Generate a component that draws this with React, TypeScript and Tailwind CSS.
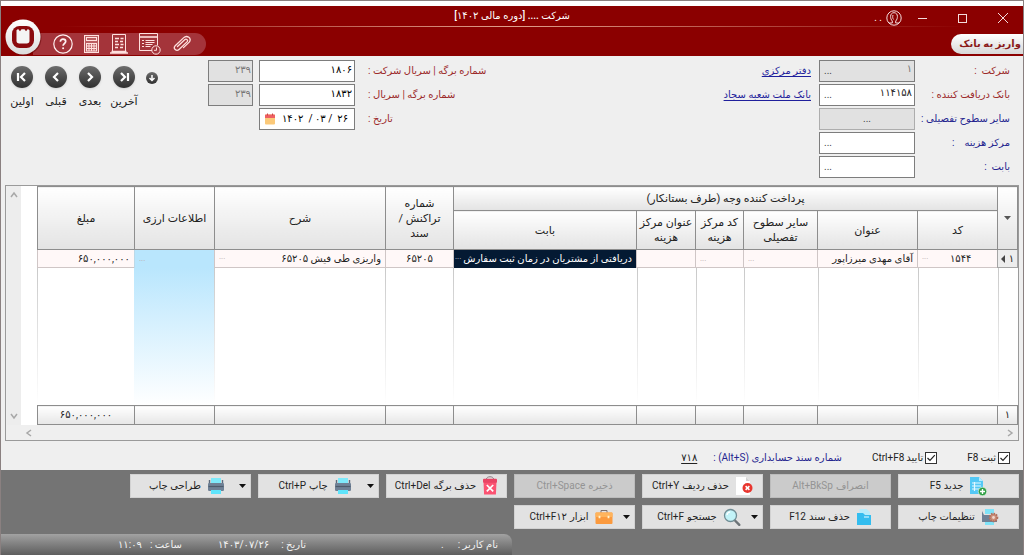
import type { ReactNode } from "react";

type IconProps = { className?: string };

function UserIcon() {
  return (
    <svg viewBox="0 0 16 16" className="size-4" fill="none" stroke="#f3dcdc" strokeWidth="1">
      <circle cx="8" cy="8" r="7.2" />
      <path d="M3 13h3.300v-2C5 9.800 4.600 8 4.600 6.400c0-2.200 1.300-3.700 3.400-3.700s3.400 1.500 3.400 3.700c0 1.600-.4 3.400-1.700 4.600v2H13" />
      <path d="M7 5c-.6 2-.3 3.500.6 4.500" />
    </svg>
  );
}

function Logo() {
  return (
    <svg viewBox="0 0 38 38" className="size-[38px]">
      <defs>
        <linearGradient id="ring" x1="0" y1="0" x2="0" y2="1">
          <stop offset="0" stopColor="#ffffff" />
          <stop offset="1" stopColor="#dcdcdc" />
        </linearGradient>
      </defs>
      <circle cx="20" cy="20" r="17.500" fill="#5c0000" opacity="0.45" />
      <circle cx="19" cy="19" r="17.500" fill="url(#ring)" />
      <rect x="8" y="8" width="22" height="22" rx="7.500" fill="#8b0a0e" />
      <path d="M12.500 12.300l1.600-1.300 1.900 2.200 1.500-2h3l1.500 2 1.900-2.200 1.600 1.300v10.400c0 1.800-1 2.800-2.800 2.800h-7.400c-1.800 0-2.800-1-2.800-2.800z" fill="#f4f4f4" />
    </svg>
  );
}

function HelpIcon() {
  return (
    <svg viewBox="0 0 20 20" className="size-5" fill="none" stroke="#fff0f0" strokeWidth="1.200">
      <circle cx="10" cy="10" r="9.200" />
      <path d="M7.400 7.800c0-1.600 1.100-2.600 2.600-2.600s2.700.9 2.700 2.400c0 1.900-2.600 2-2.600 4.200" strokeWidth="1.700" />
      <circle cx="10.100" cy="14.300" r="1" fill="#fff0f0" stroke="none" />
    </svg>
  );
}

function CalculatorIcon() {
  return (
    <svg viewBox="0 0 15 18" className="h-[18px] w-[15px]" fill="none" stroke="#ffe0de" strokeWidth="1">
      <rect x="0.500" y="0.500" width="14" height="17" fill="#ffd9d6" fillOpacity="0.25" />
      <rect x="2.500" y="2.500" width="10" height="3" />
      <path d="M2 8.500h11M2 11h11M2 13.500h11M2 16h11M2.500 8v8M5 8v8M7.500 8v8M10 8v8M12.500 8v8" />
    </svg>
  );
}

function ReportIcon() {
  return (
    <svg viewBox="0 0 18 20" className="h-5 w-[18px]" fill="none" stroke="#ffe0de" strokeWidth="1">
      <path d="M2.500 17V.5h13V17" />
      <path d="M0 19h18M1.500 17.500h15" strokeWidth="1.400" />
      <path d="M5 4.500h4M5 7.500h3M5 10.500h4M5 13.500h3M10.500 4.500h3M10 7.500h3M10.500 10.500h3M10 13.500h3" strokeWidth="1.300" />
    </svg>
  );
}

function ScheduleIcon() {
  return (
    <svg viewBox="0 0 22 22" className="size-[22px]" fill="none" stroke="#ffe0de" strokeWidth="1">
      <path d="M13 17.500H.5V.5h18v12" />
      <path d="M.5 4h18" strokeWidth="1.600" />
      <path d="M3 7.500h2M3 10.500h2M3 13.500h2M6.500 7.500h9M6.500 9.500h9M6.500 11.500h7M6.500 13.500h5" strokeWidth="1.200" />
      <circle cx="17" cy="17" r="4.200" />
      <path d="M17.500 14.500v2.800h-2.500" />
    </svg>
  );
}

function ClipIcon() {
  return (
    <svg viewBox="0 0 20 18" className="h-[18px] w-5" fill="none" stroke="#ffe0de" strokeWidth="1.300" strokeLinecap="round">
      <path d="M5.500 11.500l7.200-6.800c1.700-1.500 3.800.6 2.300 2.200l-8 7.600c-2.600 2.400-6.300-1-3.800-3.700l8.300-7.900c3.400-3.200 8.900.3 5.700 4.200l-5.700 5.500" />
    </svg>
  );
}

function PageAddIcon({ className }: IconProps) {
  return (
    <svg viewBox="0 0 18 20" className={className}>
      <path d="M1 1h9l4 4v13H1z" fill="#54c8f5" />
      <path d="M10 1l4 4h-4z" fill="#b4ebff" />
      <path d="M3 7h9M3 10h9M3 13h9M5.500 6v9" stroke="#e4f8ff" strokeWidth="1.200" />
      <circle cx="13.500" cy="15.500" r="4.200" fill="#2f9e44" stroke="#e4f5e6" strokeWidth="0.600" />
      <path d="M13.500 13v5M11 15.500h5" stroke="#fff" strokeWidth="1.400" />
    </svg>
  );
}

function PageDeleteIcon({ className }: IconProps) {
  return (
    <svg viewBox="0 0 18 20" className={className}>
      <path d="M1 1h10l4 4v14H1z" fill="#ffffff" />
      <path d="M11 1l4 4h-4z" fill="#d3d3d3" />
      <circle cx="12.500" cy="12" r="5" fill="#e8352e" />
      <path d="M10.600 10.100l3.800 3.800M14.400 10.100l-3.800 3.800" stroke="#fff" strokeWidth="1.500" />
    </svg>
  );
}

function TrashIcon({ className }: IconProps) {
  return (
    <svg viewBox="0 0 16 20" className={className}>
      <path d="M4.500 3c0-3 7-3 7 0" fill="none" stroke="#8a7a80" strokeWidth="1" />
      <path d="M1.500 6h13l-.6 12.500H2.100z" fill="#fb5372" />
      <rect x="1" y="2.800" width="14" height="4" rx="1" fill="#e94464" />
      <path d="M4.800 9l6.400 6.400M11.200 9l-6.400 6.400" stroke="#fff" strokeWidth="1.700" />
    </svg>
  );
}

function PrinterIcon({ className }: IconProps) {
  return (
    <svg viewBox="0 0 18 18" className={className}>
      <path d="M4 1h10v5H4z" fill="#7fe9fa" />
      <path d="M2.500 3v5M15.500 3v5" stroke="#5c6b7c" strokeWidth="1.400" />
      <rect x="1" y="6" width="16" height="8" rx="1.200" fill="#6f8196" />
      <path d="M1.500 9.500h15" stroke="#4d5b6b" strokeWidth="1.200" />
      <path d="M4 13h10v4H4z" fill="#5fe4fb" />
    </svg>
  );
}

function PrintSettingsIcon({ className }: IconProps) {
  return (
    <svg viewBox="0 0 18 18" className={className}>
      <path d="M4 1h9v5H4zM4 12h9v5H4z" fill="#7fe3f8" />
      <path d="M1 3v11h15V7H3z" fill="#6f8196" />
      <circle cx="12.500" cy="9.500" r="3.800" fill="#c98f7a" stroke="#b3705c" strokeWidth="2" strokeDasharray="1.500 1" />
      <circle cx="12.500" cy="9.500" r="1.400" fill="#f1d9cf" />
    </svg>
  );
}

function FolderIcon({ className }: IconProps) {
  return (
    <svg viewBox="0 0 16 18" className={className}>
      <path d="M3.500 1h7l3.500 3v8H3.500z" fill="#b5ecfb" />
      <path d="M1 5h6l2 2h6v10H1z" fill="#33bdef" />
      <path d="M8 9h5" stroke="#c8f2ff" strokeWidth="1.200" />
    </svg>
  );
}

function SearchIcon({ className }: IconProps) {
  return (
    <svg viewBox="0 0 18 18" className={className}>
      <path d="M11.500 12l4.800 4.800" stroke="#6d7478" strokeWidth="2.400" strokeLinecap="round" />
      <circle cx="7.500" cy="7.500" r="6" fill="#c2f3f8" stroke="#6f8c94" strokeWidth="1.300" />
      <path d="M4 7c.2-1.800 1.400-3 3.200-3.200" stroke="#fff" strokeWidth="1.300" fill="none" />
    </svg>
  );
}

function ToolboxIcon({ className }: IconProps) {
  return (
    <svg viewBox="0 0 18 16" className={className}>
      <path d="M6 4V1.500h6V4" fill="none" stroke="#7d6f6a" strokeWidth="1" />
      <rect x="0.500" y="3.500" width="17" height="11.500" rx="1" fill="#fb9a3e" />
      <path d="M.5 4.500c0-.6.4-1 1-1h15c.6 0 1 .4 1 1V8H.5z" fill="#ffb45c" />
      <path d="M4.500 6.800v2.400M13.500 6.800v2.400" stroke="#fff3d0" strokeWidth="1.800" />
    </svg>
  );
}

function CalendarIcon() {
  return (
    <svg viewBox="0 0 12 12" className="size-3">
      <rect x="1" y="1.500" width="10" height="10" rx="1" fill="#fbc979" />
      <path d="M1 2.500c0-.6.4-1 1-1h8c.6 0 1 .4 1 1V5H1z" fill="#ee5f63" />
      <path d="M3.500.5v2M8.500.5v2" stroke="#c9454b" strokeWidth="1" />
    </svg>
  );
}

const CHEVRONS = {
  first: "M6 6v8M13 6l-4 4 4 4",
  prev: "M12 6l-4 4 4 4",
  next: "M8 6l4 4-4 4",
  last: "M14 6v8M7 6l4 4-4 4",
  down: "M10 4v11M5 10l5 5 5-5",
};

function NavButton({ kind, label }: { kind: keyof typeof CHEVRONS; label: string }) {
  return (
    <button type="button" className="flex w-[34px] flex-col items-center gap-1 whitespace-nowrap text-[11px] text-[#222]">
      <span className="flex size-[22px] items-center justify-center rounded-full bg-linear-to-b from-[#6d6d6d] to-[#303030] shadow-sm">
        <svg viewBox="0 0 20 20" className="size-5" fill="none" stroke="#fff" strokeWidth="2.200">
          <path d={CHEVRONS[kind]} />
        </svg>
      </span>
      <span className="leading-5">{label}</span>
    </button>
  );
}

type FieldProps = { id: string; label: string; value?: string; tone: string; disabled?: boolean; link?: string };

function LookupField({ id, label, value = "", tone, disabled, link }: FieldProps) {
  return (
    <div className="flex h-[22px] items-center">
      <label htmlFor={id} className={`w-[95px] shrink-0 whitespace-pre ${tone}`}>
        {label}
      </label>
      <div className={`flex h-[22px] w-24 border border-[#7d7d7d] ${disabled ? "bg-[#e1e1e1] text-[#777]" : "bg-white text-[#222]"}`}>
        <input id={id} defaultValue={value} disabled={disabled} className="h-4 min-w-0 flex-1 bg-transparent pr-[2px] text-right" />
        <button type="button" aria-label={`انتخاب ${label}`} className="px-1 leading-3 text-[#444]">
          ...
        </button>
      </div>
      {link && (
        <a href="#" className="ms-2 whitespace-nowrap text-[#1f1f9c] underline underline-offset-2">
          {link}
        </a>
      )}
    </div>
  );
}

function SerialField({ id, label, value, locked }: { id: string; label: string; value: string; locked: string }) {
  return (
    <div className="flex h-[22px] items-center">
      <label htmlFor={id} className="w-[120px] shrink-0 whitespace-nowrap text-left text-[#9c2a2a]">
        {label}
      </label>
      <input id={id} defaultValue={value} className="mr-[13px] h-[22px] w-24 border border-[#7d7d7d] bg-white px-[2px] pb-1 text-right" />
      <input aria-label="سری" defaultValue={locked} disabled className="mr-[6px] h-[22px] w-[45px] border border-[#7d7d7d] bg-[#e1e1e1] px-px pb-1 text-right text-[#777]" />
    </div>
  );
}

type CommandProps = { text: string; keys?: string; icon?: ReactNode; menu?: boolean; disabled?: boolean };

function Command({ text, keys, icon, menu, disabled }: CommandProps) {
  return (
    <button
      type="button"
      disabled={disabled}
      className={`flex h-6 w-[121px] items-center whitespace-nowrap border px-1 ${
        disabled ? "border-[#bcbcbc] bg-[#cbcbcb] text-[#949494]" : "border-[#d2d2d2] bg-[#e2e2e2] text-[#222]"
      }`}
    >
      {menu && (
        <svg viewBox="0 0 7 4" className="h-1 w-[7px]">
          <path d="M0 0h7L3.500 4z" fill="#111" />
        </svg>
      )}
      <span className="flex flex-1 items-center justify-center gap-[6px]">
        {icon}
        <span className="flex gap-[3px]">
          <span>{text}</span>
          {keys && <span dir="ltr">{keys}</span>}
        </span>
      </span>
    </button>
  );
}

const HEAD = "border border-[#8d8d8d] bg-linear-to-b from-white to-[#e3e3e3] font-normal leading-[15px]";
const CELL = "overflow-hidden whitespace-nowrap border border-t-0 border-[#cfc6c6] bg-[#fff8f8] px-1";
const LINE = "bg-[linear-gradient(to_bottom,#c9c9c9,#ffffff)] bg-[length:1px_100%] bg-left bg-no-repeat";
const FOOT = "border border-[#8d8d8d] bg-linear-to-b from-white to-[#e6e6e6]";

function Dots({ tone = "text-[#b9a9a9]" }: { tone?: string }) {
  return <span className={`float-left text-[8px] leading-3 ${tone}`}>...</span>;
}

function VoucherTable() {
  return (
    <table className="w-full table-fixed border-collapse text-center text-[#222]">
      <colgroup>
        <col className="w-5" />
        <col className="w-[80px]" />
        <col className="w-[100px]" />
        <col className="w-[74px]" />
        <col className="w-12" />
        <col className="w-[59px]" />
        <col className="w-[183px]" />
        <col className="w-[68px]" />
        <col className="w-[171px]" />
        <col className="w-20" />
        <col className="w-[97px]" />
      </colgroup>
      <thead className="text-[11px]">
        <tr className="h-6">
          <th rowSpan={2} className={HEAD}>
            <svg viewBox="0 0 7 4" className="mx-auto h-1 w-[7px]">
              <path d="M0 0h7L3.500 4z" fill="#555" />
            </svg>
          </th>
          <th colSpan={6} className={HEAD}>پرداخت کننده وجه (طرف بستانکار)</th>
          <th rowSpan={2} className={`${HEAD} px-2`}>شماره تراکنش / سند</th>
          <th rowSpan={2} className={HEAD}>شرح</th>
          <th rowSpan={2} className={HEAD}>اطلاعات ارزی</th>
          <th rowSpan={2} className={HEAD}>مبلغ</th>
        </tr>
        <tr className="h-[39px]">
          <th className={HEAD}>کد</th>
          <th className={HEAD}>عنوان</th>
          <th className={HEAD}>سایر سطوح تفصیلی</th>
          <th className={HEAD}>کد مرکز هزینه</th>
          <th className={HEAD}>عنوان مرکز هزینه</th>
          <th className={HEAD}>بابت</th>
        </tr>
      </thead>
      <tbody>
        <tr className="h-[18px] leading-4">
          <td className="border border-[#a5a5a5] bg-[#ededed]">
            <span className="flex items-center justify-center gap-[3px]">
              <span>۱</span>
              <svg viewBox="0 0 5 8" className="h-2 w-[5px]">
                <path d="M4 0v8L0 4z" fill="#444" />
              </svg>
            </span>
          </td>
          <td className={CELL}><Dots />۱۵۴۴</td>
          <td className={`${CELL} text-right`}>آقای مهدی میرزاپور</td>
          <td className={CELL}><Dots /></td>
          <td className={CELL}><Dots /></td>
          <td className={CELL} />
          <td className="overflow-hidden whitespace-nowrap bg-[#041a33] pr-1 pl-px text-right text-white"><Dots tone="text-[#c9d3dd]" />دریافتی از مشتریان در زمان ثبت سفارش</td>
          <td className={CELL}>۶۵۲۰۵</td>
          <td className={`${CELL} text-right`}><Dots />واریزی طی فیش ۶۵۲۰۵</td>
          <td className="border-x border-[#bcd9e8] bg-[#b9e6fd] px-1"><Dots /></td>
          <td className={`${CELL} text-right`}>۶۵۰,۰۰۰,۰۰۰</td>
        </tr>
        <tr className="h-[138px]">
          <td className={LINE} />
          <td className={LINE} />
          <td className={LINE} />
          <td className={LINE} />
          <td className={LINE} />
          <td className={LINE} />
          <td className={LINE} />
          <td className={LINE} />
          <td className={LINE} />
          <td className="bg-linear-to-b from-[#b9e6fd] to-white" />
          <td className={LINE} />
        </tr>
      </tbody>
      <tfoot>
        <tr className="h-[19px] leading-4">
          <td className={FOOT}>۱</td>
          <td className={FOOT} />
          <td className={FOOT} />
          <td className={FOOT} />
          <td className={FOOT} />
          <td className={FOOT} />
          <td className={FOOT} />
          <td className={FOOT} />
          <td className={FOOT} />
          <td className={FOOT} />
          <td className={FOOT}>۶۵۰,۰۰۰,۰۰۰</td>
        </tr>
      </tfoot>
    </table>
  );
}

function Arrow({ d }: { d: string }) {
  return (
    <svg viewBox="0 0 8 8" className="size-2" fill="none" stroke="#a8a8a8" strokeWidth="1.500">
      <path d={d} />
    </svg>
  );
}

function CheckItem({ text, keys }: { text: string; keys: string }) {
  return (
    <label className="flex items-center gap-[2px] text-[#222]">
      <span className="relative flex size-3">
        <input type="checkbox" defaultChecked className="peer size-3 appearance-none border border-[#333] bg-white" />
        <svg viewBox="0 0 12 12" className="pointer-events-none absolute inset-0 hidden size-3 peer-checked:block" fill="none" stroke="#222" strokeWidth="1.200">
          <path d="M2.500 6l2.500 2.500L9.800 3.200" />
        </svg>
      </span>
      <span>{text}</span>
      <span dir="ltr">{keys}</span>
    </label>
  );
}

export default function App() {
  return (
    <div
      dir="rtl"
      lang="fa"
      className="flex min-h-screen flex-col border-x border-t border-[#8a8080] bg-[#efefef] font-[Roboto,'DejaVu_Sans',sans-serif] text-[10px] leading-4"
    >
      <header className="relative border-t-5 border-white bg-[#8b0000] text-white">
        <div className="grid h-5 grid-cols-[1fr_auto_1fr] items-center">
          <div className="flex items-center gap-[22px] ps-[11px] pt-[3px]">
            <button type="button" aria-label="بستن">
              <svg viewBox="0 0 18 12" className="h-3 w-[18px]" fill="none" stroke="#f3dcdc">
                <path d="M4 1l10 10M14 1L4 11" />
              </svg>
            </button>
            <button type="button" aria-label="بزرگ‌نمایی">
              <svg viewBox="0 0 18 12" className="h-3 w-[18px]" fill="none" stroke="#f3dcdc">
                <rect x="4.500" y="2.500" width="8" height="8" />
              </svg>
            </button>
            <button type="button" aria-label="کوچک‌نمایی">
              <svg viewBox="0 0 18 12" className="h-3 w-[18px]" fill="none" stroke="#f3dcdc">
                <path d="M4 6.500h9" />
              </svg>
            </button>
            <span className="-ms-[10px] flex items-center gap-1">
              <UserIcon />
              <span>. .</span>
            </span>
          </div>
          <h1 className="font-medium">شرکت .... [دوره مالی ۱۴۰۲]</h1>
          <span />
        </div>
        <div className="mx-14 h-px bg-linear-to-r from-transparent via-[#e0a08c] to-transparent" />
        <div className="flex h-[29px] items-center justify-between">
          <h2 className="mt-1 flex h-5 items-center rounded-l-[10px] bg-linear-to-b from-white to-[#d8d8d8] ps-[2px] pe-2 text-[10px] font-bold text-[#8b1a1a]">
            واریز به بانک
          </h2>
          <nav className="mt-1 ml-8 flex h-[22px] items-center gap-[11px] rounded-r-full bg-[#a4343a] pr-[14px] pl-5">
            <button type="button" aria-label="پیوست"><ClipIcon /></button>
            <button type="button" aria-label="زمان‌بندی"><ScheduleIcon /></button>
            <button type="button" aria-label="گزارش"><ReportIcon /></button>
            <button type="button" aria-label="ماشین حساب"><CalculatorIcon /></button>
            <button type="button" aria-label="راهنما"><HelpIcon /></button>
          </nav>
        </div>
        <div className="absolute top-[12px] left-[3px]">
          <Logo />
        </div>
      </header>

      <main className="flex flex-1 flex-col">
        <form className="flex items-start justify-between pt-1 pr-[13px] pb-[7px] pl-1">
          <div className="flex flex-col gap-[2px]">
            <LookupField id="company" label="شرکت  :" value="۱" tone="text-[#9c2a2a]" disabled link="دفتر مرکزی" />
            <LookupField id="bank" label="بانک دریافت کننده :" value="۱۱۴۱۵۸" tone="text-[#9c2a2a]" link="بانک ملت شعبه سجاد" />
            <div className="flex h-[22px] items-center">
              <label htmlFor="levels" className="w-[95px] shrink-0 whitespace-nowrap text-[#26268f]">سایر سطوح تفصیلی :</label>
              <button id="levels" type="button" className="h-[22px] w-24 border border-[#adadad] bg-[#e1e1e1] text-[#444]">...</button>
            </div>
            <LookupField id="center" label="مرکز هزینه    :" tone="text-[#26268f]" />
            <LookupField id="about" label="بابت  :" tone="text-[#26268f]" />
          </div>
          <div className="flex gap-[50px]">
            <div className="flex flex-col gap-[2px]">
              <SerialField id="s1" label="شماره برگه | سریال شرکت :" value="۱۸۰۶" locked="۲۳۹" />
              <SerialField id="s2" label="شماره برگه | سریال :" value="۱۸۳۲" locked="۲۳۹" />
              <div className="flex h-[22px] items-center">
                <label htmlFor="date" className="w-[120px] shrink-0 text-left text-[#9c2a2a]">
                  تاریخ :
                </label>
                <div dir="ltr" className="mr-[13px] flex h-[22px] w-24 items-center border border-[#7d7d7d] bg-white pl-1">
                  <button type="button" aria-label="تقویم"><CalendarIcon /></button>
                  <input id="date" defaultValue="۱۴۰۲  / ۰۳ /  ۲۶" className="min-w-0 flex-1 text-center" />
                </div>
              </div>
            </div>
            <div className="flex pt-[6px]">
              <button type="button" aria-label="پایین" className="mt-[6px] flex size-3 items-center justify-center rounded-full bg-linear-to-b from-[#6d6d6d] to-[#303030]">
                <svg viewBox="0 0 20 20" className="size-[10px]" fill="none" stroke="#fff" strokeWidth="3">
                  <path d={CHEVRONS.down} />
                </svg>
              </button>
              <div className="mr-[5px] flex">
                <NavButton kind="last" label="آخرین" />
                <NavButton kind="next" label="بعدی" />
                <NavButton kind="prev" label="قبلی" />
                <NavButton kind="first" label="اولین" />
              </div>
            </div>
          </div>
        </form>

        <section className="mr-1 ml-1 flex flex-col border border-[#9a9a9a]">
          <div className="flex">
            <div className="flex-1 bg-white pl-4">
              <VoucherTable />
            </div>
            <div className="ml-px flex w-[14px] flex-col items-center justify-between bg-[#ededed] py-[5px]">
              <Arrow d="M1 6l3-4 3 4" />
              <Arrow d="M1 2l3 4 3-4" />
            </div>
          </div>
          <div className="flex h-[15px] items-center justify-between pr-1 pl-[19px]">
            <Arrow d="M2 1l4 3-4 3" />
            <Arrow d="M6 1L2 4l4 3" />
          </div>
        </section>

        <div className="flex flex-1 items-center gap-[30px] pt-1 pr-[13px]">
          <CheckItem text="ثبت" keys="F8" />
          <CheckItem text="تایید" keys="Ctrl+F8" />
          <p className="flex gap-4">
            <span className="text-[#26268f]">شماره سند حسابداری (Alt+S) :</span>
            <a href="#" className="text-[#222] underline underline-offset-2">۷۱۸</a>
          </p>
        </div>
      </main>

      <footer className="bg-[#747474]">
        <div className="flex flex-col gap-[7px] pt-1 pr-1 pb-[5px]">
          <div className="flex gap-[7px]">
            <Command text="جدید" keys="F5" icon={<PageAddIcon className="h-5 w-[18px]" />} />
            <Command text="انصراف" keys="Alt+BkSp" disabled />
            <Command text="حذف ردیف" keys="Ctrl+Y" icon={<PageDeleteIcon className="h-5 w-[18px]" />} />
            <Command text="ذخیره" keys="Ctrl+Space" disabled />
            <Command text="حذف برگه" keys="Ctrl+Del" icon={<TrashIcon className="h-5 w-4" />} />
            <Command text="چاپ" keys="Ctrl+P" icon={<PrinterIcon className="size-[18px]" />} menu />
            <Command text="طراحی چاپ" icon={<PrinterIcon className="size-[18px]" />} menu />
          </div>
          <div className="flex gap-[7px]">
            <Command text="تنظیمات چاپ" icon={<PrintSettingsIcon className="size-[18px]" />} />
            <Command text="حذف سند" keys="F12" icon={<FolderIcon className="h-[18px] w-4" />} />
            <Command text="جستجو" keys="Ctrl+F" icon={<SearchIcon className="size-[18px]" />} menu />
            <Command text="ابزار" keys="Ctrl+F۱۲" icon={<ToolboxIcon className="h-4 w-[18px]" />} menu />
          </div>
        </div>
        <div className="mr-auto flex h-[21px] w-1/2 items-center rounded-tr-lg bg-linear-to-b from-[#a2a2a2] to-[#5e5e5e] ps-[14px] text-[#f2f2f2]">
          <span className="flex w-[192px] gap-[14px]">
            <span>نام کاربر :</span>
            <span>.</span>
          </span>
          <span className="flex w-[124px] gap-3">
            <span>تاریخ :</span>
            <span dir="ltr">۱۴۰۳/۰۷/۲۶</span>
          </span>
          <span className="flex gap-2">
            <span>ساعت :</span>
            <span dir="ltr">۱۱:۰۹</span>
          </span>
        </div>
      </footer>
    </div>
  );
}
